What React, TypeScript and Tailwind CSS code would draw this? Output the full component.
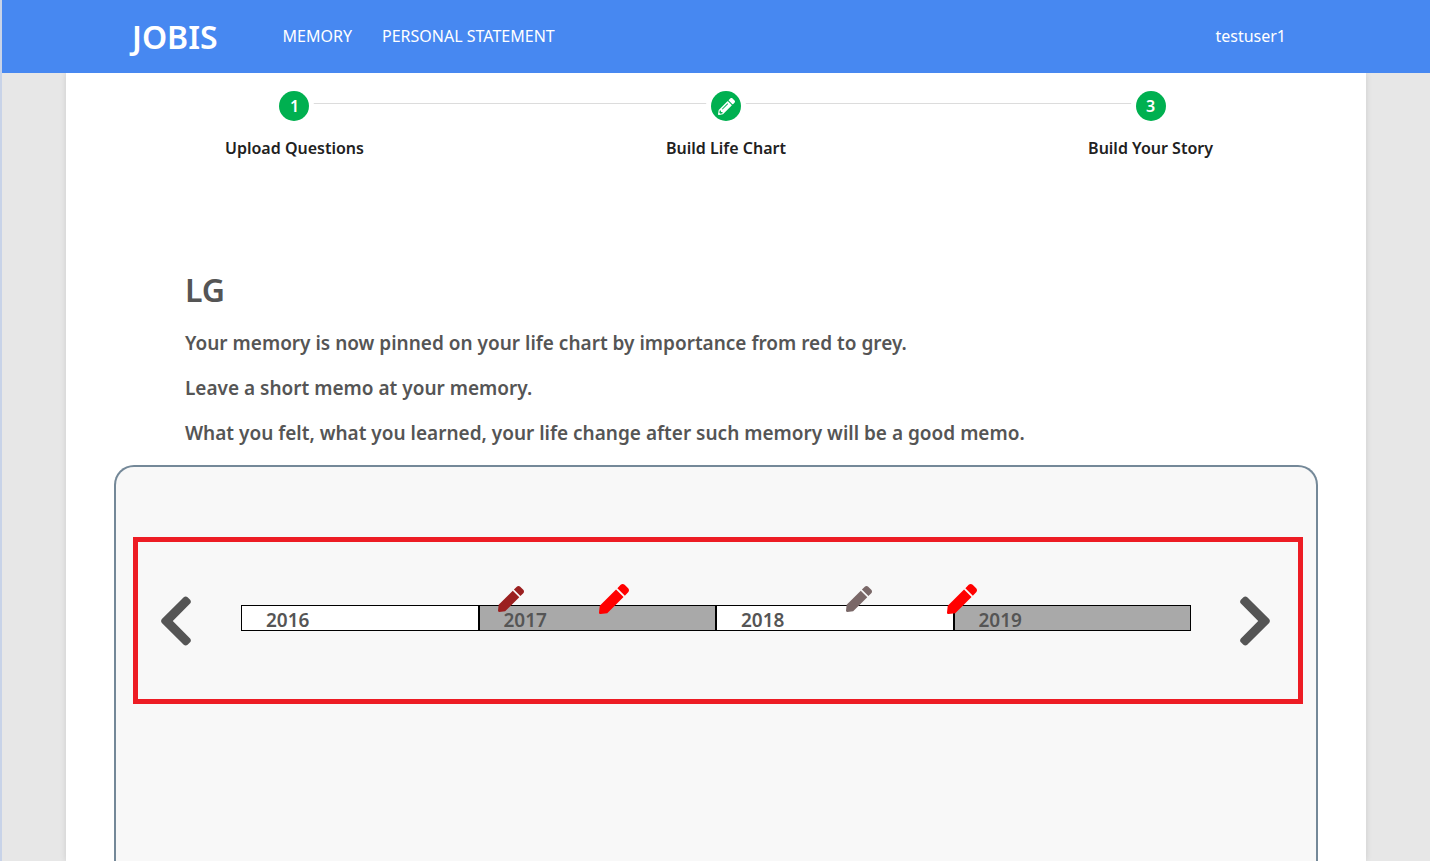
import React from "react";
import { FaChevronLeft, FaChevronRight, FaPen, FaPencilAlt } from "react-icons/fa";

const years = [2016, 2017, 2018, 2019];

const memories = [
  { id: 1, left: "28.4%", tone: "size-[26px] text-[#9b2020]", label: "Memory, early 2017" },
  { id: 2, left: "39.3%", tone: "size-[30px] text-[#ff0000]", label: "Memory, mid 2017" },
  { id: 3, left: "65%", tone: "size-[26px] text-[#7a6868]", label: "Memory, mid 2018" },
  { id: 4, left: "75.9%", tone: "size-[30px] text-[#ff0000]", label: "Memory, early 2019" },
];

const notes = [
  "Your memory is now pinned on your life chart by importance from red to grey.",
  "Leave a short memo at your memory.",
  "What you felt, what you learned, your life change after such memory will be a good memo.",
];

function Header() {
  return (
    <header className="relative bg-[#4788f1] text-white">
      <div className="mx-auto flex h-[73px] max-w-[1300px] items-center px-[66px]">
        <a href="#home" className="text-[32px] leading-[48px] font-semibold">JOBIS</a>
        <nav className="ml-[65px] flex gap-[30px] pb-0.5 text-base">
          <a href="#memory">MEMORY</a>
          <a href="#statement">PERSONAL STATEMENT</a>
        </nav>
        <a href="#account" className="mr-3.5 ml-auto pb-0.5 text-base">testuser1</a>
      </div>
    </header>
  );
}

function Step({ label, children }: { label: string; children: React.ReactNode }) {
  return (
    <li className="flex shrink-0 flex-col items-center">
      <span className="z-10 flex size-[30px] items-center justify-center rounded-full bg-[#00b050] text-base font-semibold text-white ring-5 ring-white">
        {children}
      </span>
      <span className="mt-[15px] text-base leading-6 font-semibold text-[#212121]">{label}</span>
    </li>
  );
}

function StepLine() {
  return <li aria-hidden="true" className="-mx-[60px] mt-3 h-px grow bg-[#dcdcdc]" />;
}

function Steps() {
  return (
    <ol className="isolate flex pt-[18px] pr-[153px] pl-[159px]">
      <Step label="Upload Questions">1</Step>
      <StepLine />
      <Step label="Build Life Chart"><FaPencilAlt className="size-[17px]" /></Step>
      <StepLine />
      <Step label="Build Your Story">3</Step>
    </ol>
  );
}

function Timeline() {
  return (
    <div className="relative mr-[46px] mb-1.5 ml-[47px] grow">
      <ol className="grid grid-cols-4 text-[19px] leading-6 font-semibold text-[#555555]">
        {years.map((year) => (
          <li key={year} className="h-[26px] border border-black bg-white pt-0.5 pl-6 even:bg-[#a9a9a9]">
            {year}
          </li>
        ))}
      </ol>
      {memories.map((m) => (
        <button key={m.id} type="button" aria-label={m.label} style={{ left: m.left }} className="absolute -top-1.5 -translate-1/2">
          <FaPen className={m.tone} />
        </button>
      ))}
    </div>
  );
}

export default function App() {
  return (
    <div className="flex min-h-screen flex-col border-l-2 border-[#c8d3e8] bg-[#e7e7e7] font-['Noto_Sans','Open_Sans',sans-serif]">
      <Header />
      <main className="mx-auto flex w-full max-w-[1300px] grow flex-col bg-white shadow-[0_0_6px_rgba(0,0,0,0.12)]">
        <Steps />
        <section className="mt-[106px] px-[119px] font-semibold text-[#555555]">
          <h1 className="text-[32px] leading-[48px]">LG</h1>
          <div className="mt-4 flex flex-col gap-[18px] text-[19px] leading-[27px]">
            {notes.map((note) => <p key={note}>{note}</p>)}
          </div>
        </section>
        <section className="mx-12 mt-[18px] grow rounded-t-[20px] border-2 border-b-0 border-[#748898] bg-[#f8f8f8] pt-[70px] pr-[13px] pl-[17px]">
          <div className="flex h-[167px] items-center border-5 border-[#ed1c24] pr-[25px] pl-5 text-[#555555]">
            <button type="button" aria-label="Earlier years"><FaChevronLeft className="h-[58px] w-9" /></button>
            <Timeline />
            <button type="button" aria-label="Later years"><FaChevronRight className="h-[58px] w-9" /></button>
          </div>
        </section>
      </main>
    </div>
  );
}
